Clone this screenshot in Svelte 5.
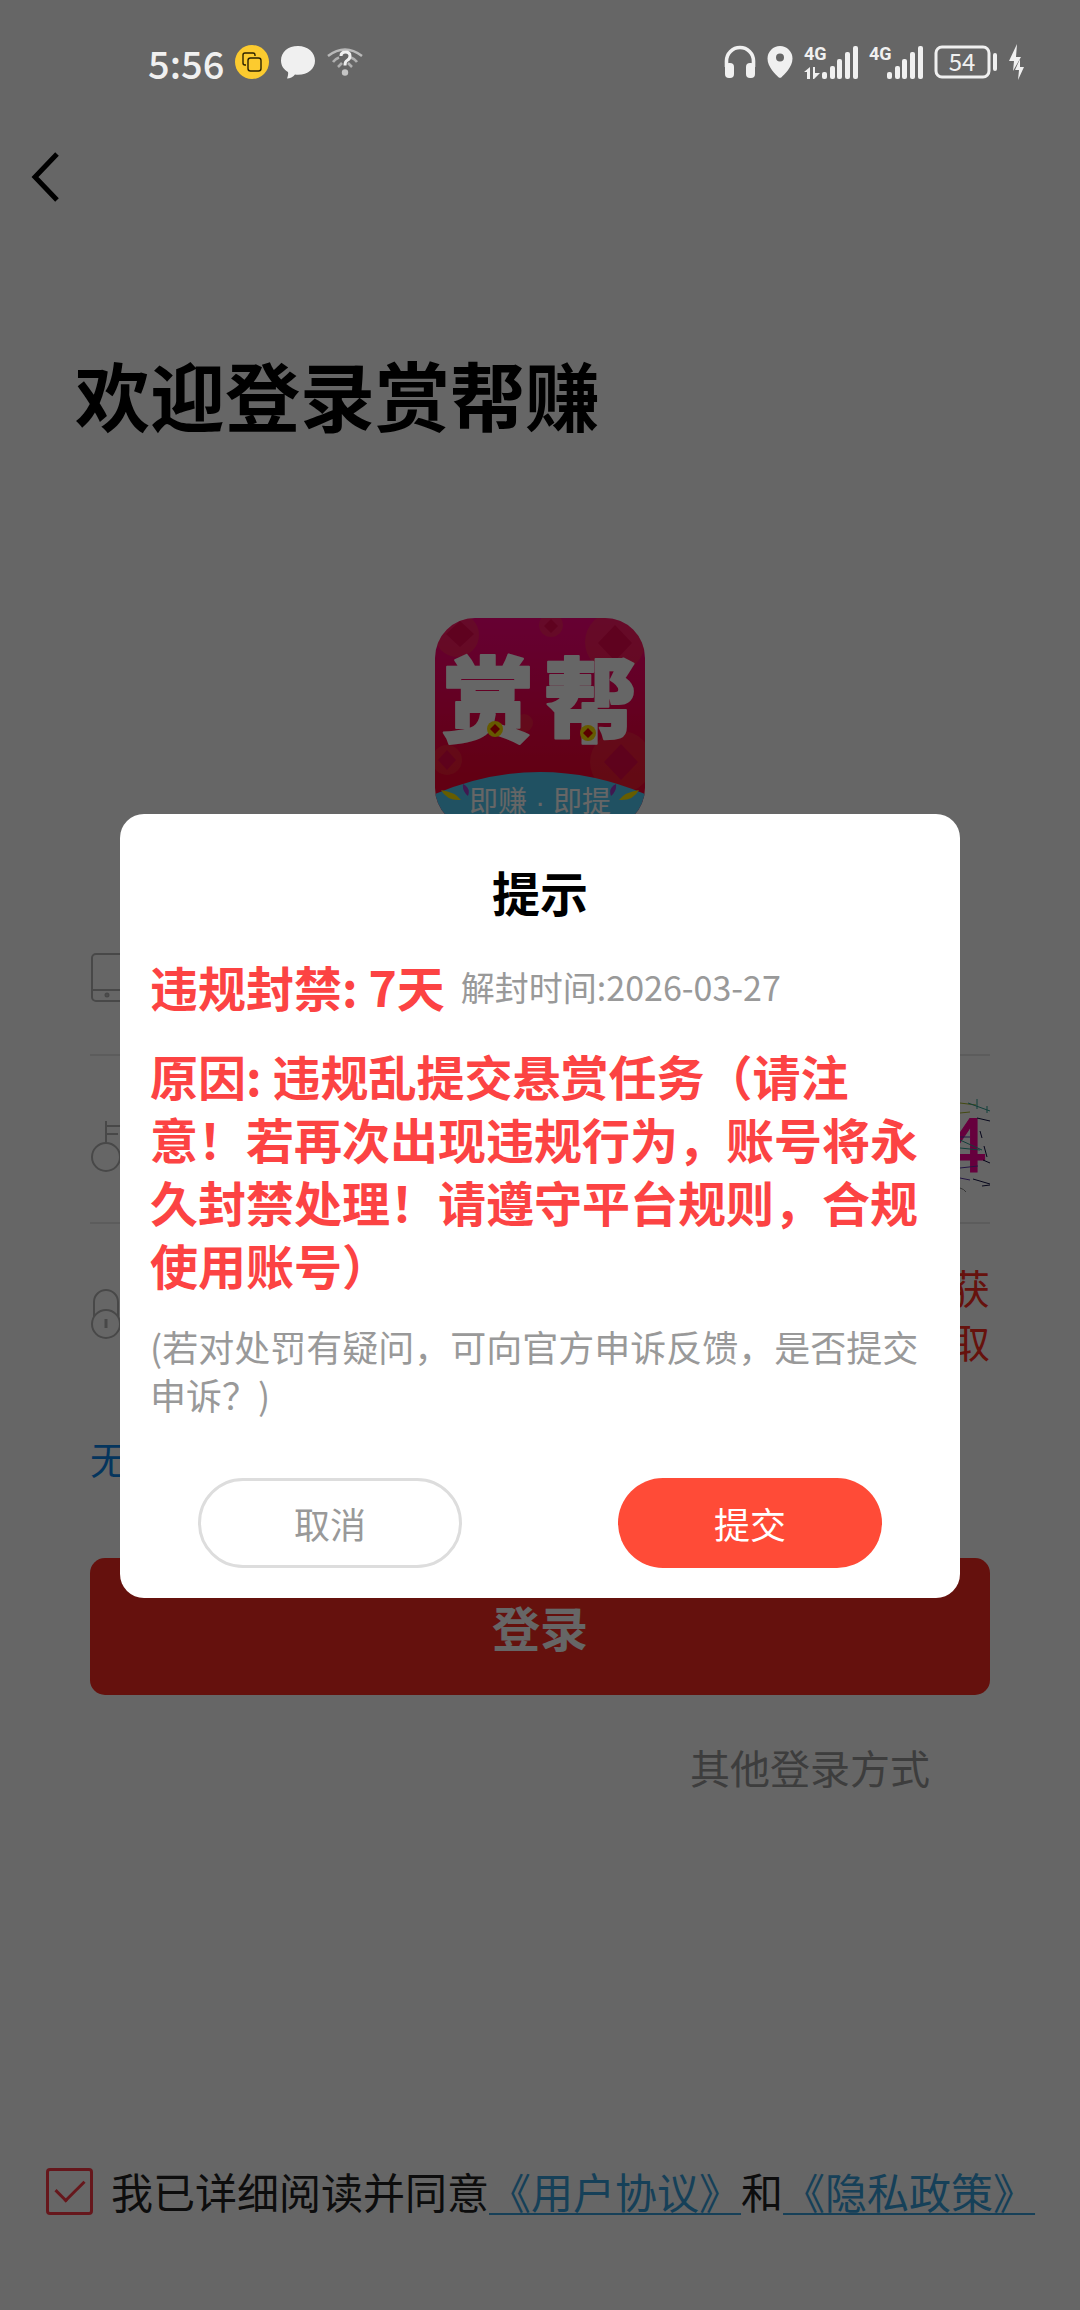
<script>
  let agreed = $state(true);
  let phone = $state('');
  let captcha = $state('');
  let code = $state('');

  const bars = [
    { x: 0, h: 7 },
    { x: 8, h: 13 },
    { x: 15, h: 20 },
    { x: 23, h: 27 },
    { x: 31, h: 33 }
  ];
</script>

<div class="screen">
  <header class="status">
    <div class="status-side">
      <span class="clock">5:56</span>
      <svg width="34" height="34" viewBox="0 0 34 34" aria-hidden="true">
        <circle cx="17" cy="17" r="17" fill="#fccb2f" />
        <path d="M11 20h-1q-2 0-2-2v-8q0-2 2-2h8q2 0 2 2v1" fill="none" stroke="#2b2200" stroke-width="1.4" />
        <rect x="13" y="13" width="13" height="13" rx="2.500" fill="none" stroke="#2b2200" stroke-width="1.4" />
      </svg>
      <svg width="36" height="34" viewBox="0 0 36 34" aria-hidden="true">
        <path d="M18 1C8 1 1 7 1 15.500c0 5 2.500 9 7 11.500.5 2-.2 4.500-1 6.500 3 0 6-1.500 8-4 1 .2 2 .2 3 .2 10 0 17-6 17-14S28 1 18 1z" fill="#f0f0f0" />
      </svg>
      <svg width="36" height="30" viewBox="0 0 36 30" fill="none" stroke-width="3" aria-hidden="true">
        <path d="M1 9Q18-4 35 9" stroke="#b9b9b9" stroke-width="2.500" />
        <path d="M6 15q2-3 6-4.500M30 15q-2-3-6-4.500M11 20l4-4M25 20l-4-4" stroke="#b0b0b0" stroke-width="2.500" />
        <path d="M14 9q0-4 4.500-4T23 9q0 3-3 4.500-2 1-2 5" stroke="#f0f0f0" />
        <circle cx="18" cy="25.500" r="3.200" fill="#c4c4c4" />
      </svg>
    </div>
    <div class="status-side">
      <svg width="32" height="34" viewBox="0 0 32 34" aria-hidden="true">
        <path d="M2.500 22v-6a13.500 13.500 0 0 1 27 0v6" fill="none" stroke="#f0f0f0" stroke-width="3.600" />
        <rect x="1" y="18" width="9" height="15" rx="4" fill="#f0f0f0" />
        <rect x="22" y="18" width="9" height="15" rx="4" fill="#f0f0f0" />
      </svg>
      <svg width="26" height="32" viewBox="0 0 26 32" aria-hidden="true">
        <path fill-rule="evenodd" d="M13 0a12.500 12.500 0 0 1 12.500 12.500C25.500 21 17 29 14.500 31.200q-1.500 1.200-3 0C9 29 .5 21 .5 12.500A12.500 12.500 0 0 1 13 0zm0 7.500a4 4 0 1 0 0 8 4 4 0 0 0 0-8z" fill="#f0f0f0" />
      </svg>
      {#each [true, false] as active}
        <svg class="signal" width="54" height="36" viewBox="0 0 54 36" fill="#f0f0f0" aria-label="4G">
          <text x="0" y="16" font-size="18" font-weight="700">4G</text>
          {#if active}
            <path d="M0 28l6-5v12H3v-7zM9 23h2v6h5l-6 6H9z" />
          {/if}
          {#each bars as bar}
            <rect x={18 + bar.x} y={35 - bar.h} width="5" height={bar.h} rx="2" />
          {/each}
        </svg>
      {/each}
      <svg width="64" height="34" viewBox="0 0 64 34" aria-label="54%">
        <rect x="2" y="2" width="53" height="30" rx="6" fill="none" stroke="#f0f0f0" stroke-width="3" />
        <rect x="59" y="8" width="4" height="18" rx="2" fill="#f0f0f0" />
        <text x="28" y="26" font-size="24" text-anchor="middle" fill="#f0f0f0">54</text>
      </svg>
      <svg width="15" height="36" viewBox="0 0 15 36" fill="#f0f0f0" aria-hidden="true">
        <path d="M8 0L0 17h5L4 27l8-14H7z" />
        <path d="M11 15l-5 11h4l-1 10 6-13h-4z" />
      </svg>
    </div>
  </header>

  <main>
    <nav>
      <button class="back" aria-label="返回">
        <svg width="30" height="50" viewBox="0 0 30 50" fill="none" stroke="#000" stroke-width="5">
          <path d="M27 2L5 25l22 23" />
        </svg>
      </button>
    </nav>
    <h1>欢迎登录赏帮赚</h1>

    <svg class="logo" viewBox="0 0 210 210" role="img" aria-label="赏帮">
      <defs>
        <linearGradient id="rose" x1="0" y1="0" x2="0" y2="1">
          <stop offset="0" stop-color="#ff0080" />
          <stop offset=".75" stop-color="#f50030" />
        </linearGradient>
        <clipPath id="tile"><rect width="210" height="210" rx="40" /></clipPath>
      </defs>
      <g clip-path="url(#tile)">
        <rect width="210" height="210" fill="url(#rose)" />
        <g fill="#ff4a3c" opacity=".35">
          <circle cx="22" cy="17" r="22" /><circle cx="116" cy="7" r="12" /><circle cx="180" cy="24" r="30" />
          <circle cx="12" cy="142" r="15" /><circle cx="186" cy="144" r="31" /><circle cx="89" cy="105" r="9" />
        </g>
        <g fill="#e8004a" opacity=".8">
          <path d="M25 3l14 13-14 13L11 16zM116 1l7 7-7 7-7-7zM180 7l17 18-17 18-17-18zM12 132l9 10-9 10-9-10zM186 126l17 18-17 18-17-18z" />
        </g>
        <path d="M0 176Q105 132 210 176V210H0z" fill="#52cbf5" />
        <path d="M6 172q14 2 20 10-14 1-20-10zM204 172q-14 2-20 10 14 1 20-10z" fill="#ffe800" />
        <path d="M28 166q8 4 5 12-6-5-5-12zM181 166q-8 4-5 12 6-5 5-12z" fill="#a03cc8" />
        <g class="brush">
          <text x="53" y="117">赏</text>
          <text x="155" y="117">帮</text>
        </g>
        <g fill="#ffe000">
          <circle cx="60" cy="111" r="8" /><circle cx="153" cy="115" r="8" />
        </g>
        <path d="M60 106l5 5-5 5-5-5zM153 110l5 5-5 5-5-5z" fill="#e00000" />
        <text class="tag" x="105" y="194">即赚<tspan class="dot">{'\u00a0·\u00a0'}</tspan>即提</text>
      </g>
    </svg>

    <form onsubmit={(e) => e.preventDefault()}>
      <div class="row">
        <label for="phone" aria-label="手机号">
          <svg width="32" height="50" viewBox="0 0 32 50" class="line">
            <rect x="2" y="1" width="36" height="47" rx="4" /><path d="M2 37h30" /><circle cx="17" cy="42" r="1.500" />
          </svg>
        </label>
        <input id="phone" type="tel" bind:value={phone} />
      </div>
      <div class="row">
        <label for="captcha" aria-label="图形验证码">
          <svg width="32" height="52" viewBox="0 0 32 52" class="line">
            <circle cx="16" cy="37" r="14" /><path d="M16 23V1M16 6h14M16 14h12" />
          </svg>
        </label>
        <input id="captcha" bind:value={captcha} />
        <svg class="captcha" width="90" height="100" viewBox="0 0 90 100" fill="none" stroke-width="1">
          <text x="87" y="76" text-anchor="end">4</text>
          <path d="M60 7l16 2M60 17l10-1" stroke="#a8b82c" />
          <path d="M68 7l22 8M87 10v7M77 3v10M60 44l22 10M60 52l20 2" stroke="#2c9f93" />
          <path d="M77 22l13 3M80 35l2 7M84 50l3 11M83 64l7 3M73 83l17 5M82 90l8-1" stroke="#111144" />
          <path d="M60 41h10M60 72l18-2M60 82l10 2" stroke="#5b38a8" />
          <path d="M60 92q4 1 6 4" stroke="#888" />
        </svg>
      </div>
      <div class="row last">
        <label for="code" aria-label="验证码">
          <svg width="32" height="52" viewBox="0 0 32 52" class="line">
            <path d="M4 29V14a12 12 0 0 1 24 0v15" /><circle cx="16" cy="36" r="14" /><path d="M16 31v9" stroke-width="3" />
          </svg>
        </label>
        <input id="code" bind:value={code} />
        <button type="button" class="get">获取</button>
      </div>
      <a class="help" href="#help">无</a>
      <button class="login">登录</button>
      <a class="other" href="#other">其他登录方式</a>
    </form>

    <footer>
      <input id="agree" type="checkbox" bind:checked={agreed} />
      <p><label for="agree">我已详细阅读并同意</label><a href="#terms">《用户协议》</a>和<a href="#privacy">《隐私政策》</a></p>
    </footer>
  </main>

  <div class="overlay">
    <div class="dialog" role="dialog" aria-modal="true" aria-labelledby="tip">
      <h2 id="tip">提示</h2>
      <p class="ban"><strong>违规封禁: 7天</strong><span>解封时间:2026-03-27</span></p>
      <p class="reason">原因: 违规乱提交悬赏任务（请注意！若再次出现违规行为，账号将永久封禁处理！请遵守平台规则，合规使用账号）</p>
      <p class="note">(若对处罚有疑问，可向官方申诉反馈，是否提交申诉？)</p>
      <div class="actions">
        <button class="cancel">取消</button>
        <button class="submit">提交</button>
      </div>
    </div>
  </div>
</div>

<style>
  :global(body) {
    margin: 0;
    background: #fff;
  }
  .screen {
    position: relative;
    display: flex;
    flex-direction: column;
    min-height: 100vh;
    font-family: 'Noto Sans CJK SC', sans-serif;
    color: #000;
    background: #fff;
  }
  .screen * {
    box-sizing: border-box;
  }
  h1, h2, p {
    margin: 0;
  }
  button, input {
    margin: 0;
    padding: 0;
    border: 0;
    background: none;
    font: inherit;
    color: inherit;
  }
  svg {
    display: block;
    flex: none;
  }
  .status {
    position: relative;
    z-index: 2;
    display: flex;
    justify-content: space-between;
    height: 102px;
    padding: 0 56px 0 148px;
    color: #f0f0f0;
  }
  .status-side {
    display: flex;
    align-items: center;
    gap: 11px;
    height: 124px;
  }
  .clock {
    font-size: 38px;
    font-weight: 500;
  }
  .signal {
    font-family: 'Roboto', sans-serif;
    overflow: visible;
  }
  main {
    flex: 1;
    display: flex;
    flex-direction: column;
  }
  nav {
    height: 150px;
    padding: 50px 30px;
  }
  .back {
    display: block;
  }
  h1 {
    margin: 94px 75px 0;
    font-size: 75px;
    line-height: 96px;
    font-weight: 700;
  }
  .logo {
    width: 210px;
    margin: 176px auto 0;
  }
  .brush {
    font-size: 92px;
    font-weight: 900;
    text-anchor: middle;
    fill: #fff;
    stroke: #fff;
    stroke-width: 2;
    stroke-linejoin: round;
  }
  .tag {
    font-size: 29px;
    text-anchor: middle;
    fill: #fff;
  }
  .dot {
    font-family: 'Liberation Sans', sans-serif;
  }
  form {
    display: flex;
    flex-direction: column;
    margin: 60px 90px 0;
  }
  .row {
    display: flex;
    align-items: center;
    gap: 20px;
    height: 168px;
    padding-top: 14px;
    border-bottom: 2px solid #e6e6e6;
  }
  .last {
    border-color: transparent;
  }
  .row input {
    flex: 1;
    min-width: 0;
    height: 80px;
    font-size: 40px;
    outline: 0;
  }
  .line {
    fill: none;
    stroke: #b4b4b4;
    stroke-width: 2;
  }
  .captcha {
    font-family: 'Liberation Sans', sans-serif;
    font-size: 78px;
    overflow: visible;
  }
  .captcha text {
    fill: #ff0099;
    stroke: #ff0099;
  }
  .get {
    width: 40px;
    font-size: 40px;
    line-height: 54px;
    color: #ff2d22;
  }
  .help {
    align-self: flex-start;
    margin-top: 39px;
    font-size: 38px;
    line-height: 54px;
    color: #0a84e8;
    text-decoration: none;
  }
  .login {
    height: 137px;
    margin-top: 73px;
    padding-bottom: 2px;
    border-radius: 15px;
    background: #fd2b21;
    color: #fff;
    font-size: 48px;
    font-weight: 700;
  }
  .other {
    align-self: flex-end;
    margin: 42px 60px 0 0;
    font-size: 40px;
    line-height: 60px;
    color: #999;
    text-decoration: none;
  }
  footer {
    display: flex;
    align-items: center;
    gap: 18px;
    margin-top: auto;
    padding: 0 46px 86px;
    font-size: 42px;
    line-height: 66px;
    color: #222;
    white-space: nowrap;
  }
  footer input {
    flex: none;
    width: 47px;
    height: 47px;
    border: 3px solid #ff3b46;
    border-radius: 4px;
    appearance: none;
    display: grid;
    place-items: center;
  }
  footer input:checked::before {
    content: '';
    width: 13px;
    height: 25px;
    border: solid #ff3b46;
    border-width: 0 3px 3px 0;
    rotate: 45deg;
    translate: 0 -4px;
  }
  footer a {
    color: #39a0dc;
    text-underline-offset: 4px;
    text-decoration-thickness: 2px;
  }
  .overlay {
    position: absolute;
    inset: 0;
    display: flex;
    align-items: center;
    justify-content: center;
    padding: 102px 120px 0;
    background: rgba(0, 0, 0, 0.6);
  }
  .dialog {
    flex: 1;
    padding: 41px 30px 30px;
    border-radius: 24px;
    background: #fff;
  }
  h2 {
    font-size: 48px;
    line-height: 72px;
    text-align: center;
  }
  .ban {
    display: flex;
    align-items: center;
    gap: 16px;
    margin-top: 28px;
    line-height: 63px;
    color: #999;
    font-size: 34px;
  }
  strong, .reason {
    font-size: 48px;
    line-height: 63px;
    font-weight: 700;
    color: #fc4343;
  }
  .reason {
    margin-top: 26px;
  }
  .note {
    margin-top: 26px;
    font-size: 36px;
    line-height: 48px;
    color: #999;
  }
  .actions {
    display: flex;
    justify-content: space-around;
    margin: 60px -30px 0;
  }
  .actions button {
    width: 264px;
    height: 90px;
    border-radius: 45px;
    font-size: 36px;
  }
  .cancel {
    border: 3px solid #ddd;
    color: #999;
  }
  .submit {
    background: #ff4b37;
    color: #fff;
  }
</style>
